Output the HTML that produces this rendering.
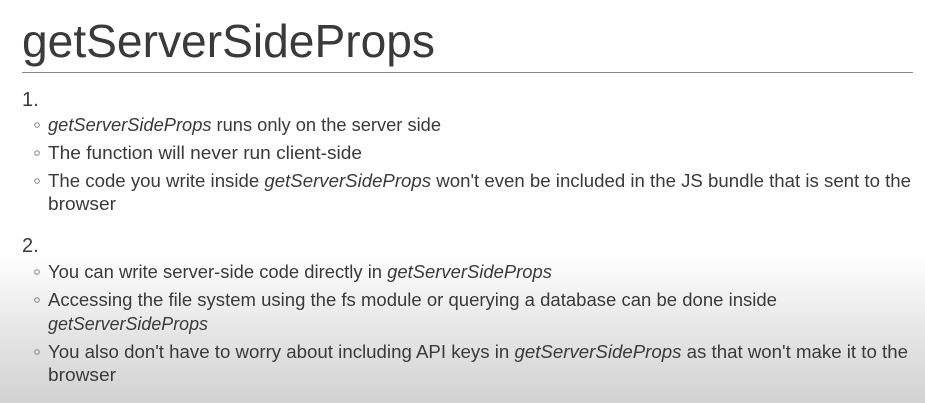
<!DOCTYPE html>
<html><head><style>
html,body{margin:0;padding:0;width:925px;height:403px;overflow:hidden}
body{background:linear-gradient(to bottom,#fff 0px,#fff 255px,#e6e6e6 330px,#d2d2d2 403px)}
svg{position:absolute;left:0;top:0}
text{font-family:"Liberation Sans",sans-serif;fill:#3a3a3a}
.b{font-size:18px}
</style></head><body>
<svg width="925" height="403" xmlns="http://www.w3.org/2000/svg">
<text x="22" y="57" font-size="46" textLength="413" lengthAdjust="spacingAndGlyphs" fill="#333">getServerSideProps</text>
<line x1="22" y1="72.5" x2="913" y2="72.5" stroke="#8a8a8a" stroke-width="1"/>
<text x="22" y="106" font-size="20">1.</text>
<g fill="none" stroke="#888" stroke-width="1">
<circle cx="37" cy="125" r="2.3"/><circle cx="37" cy="153" r="2.3"/><circle cx="37" cy="181" r="2.3"/>
<circle cx="37" cy="272" r="2.3"/><circle cx="37" cy="300" r="2.3"/><circle cx="37" cy="352" r="2.3"/>
</g>
<text class="b" x="48" y="131" textLength="393" lengthAdjust="spacingAndGlyphs"><tspan font-style="italic">getServerSideProps</tspan> runs only on the server side</text>
<text class="b" x="48" y="159" textLength="314" lengthAdjust="spacingAndGlyphs">The function will never run client-side</text>
<text class="b" x="48" y="187" textLength="863" lengthAdjust="spacingAndGlyphs">The code you write inside <tspan font-style="italic">getServerSideProps</tspan> won't even be included in the JS bundle that is sent to the</text>
<text class="b" x="48" y="210" textLength="68" lengthAdjust="spacingAndGlyphs">browser</text>
<text x="22" y="252" font-size="20">2.</text>
<text class="b" x="48" y="278" textLength="504" lengthAdjust="spacingAndGlyphs">You can write server-side code directly in <tspan font-style="italic">getServerSideProps</tspan></text>
<text class="b" x="48" y="306" textLength="729" lengthAdjust="spacingAndGlyphs">Accessing the file system using the fs module or querying a database can be done inside</text>
<text class="b" x="48" y="330" textLength="160" lengthAdjust="spacingAndGlyphs" font-style="italic">getServerSideProps</text>
<text class="b" x="48" y="358" textLength="860" lengthAdjust="spacingAndGlyphs">You also don't have to worry about including API keys in <tspan font-style="italic">getServerSideProps</tspan> as that won't make it to the</text>
<text class="b" x="48" y="381" textLength="68" lengthAdjust="spacingAndGlyphs">browser</text>
</svg>
</body></html>
